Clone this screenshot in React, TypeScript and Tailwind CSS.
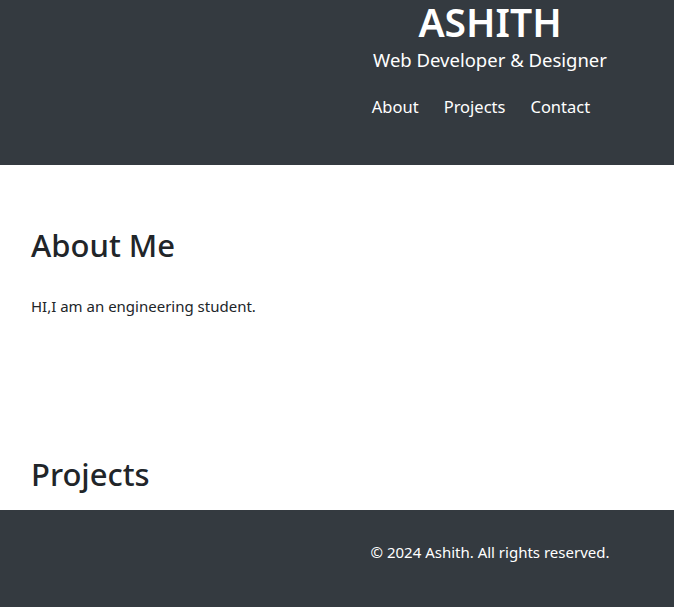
export default function App() {
  const font = { fontFamily: '"Noto Sans", "Open Sans", sans-serif' };
  return (
    <div className="min-h-[607px] bg-white overflow-hidden" style={font}>
      <header className="h-[165px] overflow-hidden bg-[#343a40] text-white">
        <div className="flex w-[980px] flex-col items-center pt-[2px]">
          <h1 className="text-[39px] font-semibold leading-[40px]">ASHITH</h1>
          <p className="mt-[4px] text-[18.5px] leading-[28px]">Web Developer &amp; Designer</p>
          <nav className="mt-[19px] flex gap-[25px] pr-[18px] text-[16.5px] leading-[28px]">
            <a href="#about">About</a>
            <a href="#projects">Projects</a>
            <a href="#contact">Contact</a>
          </nav>
        </div>
      </header>

      <main className="h-[345px] overflow-hidden px-[31px] text-[#212529]">
        <section id="about" className="pt-[61px]">
          <h2 className="text-[31px] font-medium leading-[38px]">About Me</h2>
          <p className="mt-[30px] text-[15px] leading-[24px]">HI,I am an engineering student.</p>
        </section>
        <section id="projects" className="pt-[137px]">
          <h2 className="text-[31px] font-medium leading-[38px]">Projects</h2>
        </section>
      </main>

      <footer className="h-[97px] overflow-hidden bg-[#343a40] text-white">
        <div className="flex w-[980px] justify-center pt-[30px]">
          <p className="text-[15px] leading-[24px]">© 2024 Ashith. All rights reserved.</p>
        </div>
      </footer>
    </div>
  );
}
